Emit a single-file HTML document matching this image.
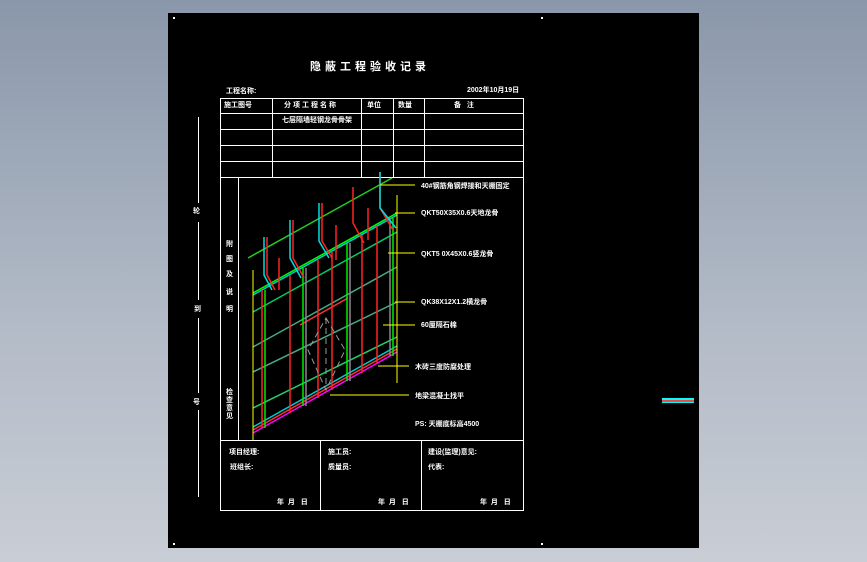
<!DOCTYPE html>
<html><head><meta charset="utf-8"><style>
html,body{margin:0;padding:0;width:867px;height:562px;overflow:hidden;background:linear-gradient(#8a97aa,#b4bcc8 60%,#c9cdd5);}
svg{position:absolute;left:0;top:0}
text{font-family:"Liberation Sans","Noto Sans CJK SC",sans-serif;fill:#fff;font-weight:bold;}
</style></head><body>
<svg width="867" height="562" viewBox="0 0 867 562">
<rect x="168" y="13" width="531" height="535" fill="#000"/>
<rect x="173" y="17" width="2" height="2" fill="#fff"/>
<rect x="541" y="17" width="2" height="2" fill="#fff"/>
<rect x="173" y="543" width="2" height="2" fill="#fff"/>
<rect x="541" y="543" width="2" height="2" fill="#fff"/>
<g stroke="#fff" stroke-width="1" fill="none">
<rect x="220.5" y="98.5" width="303" height="412"/>
<line x1="220" y1="113.5" x2="523" y2="113.5"/>
<line x1="220" y1="129.5" x2="523" y2="129.5"/>
<line x1="220" y1="145.5" x2="523" y2="145.5"/>
<line x1="220" y1="161.5" x2="523" y2="161.5"/>
<line x1="220" y1="177.5" x2="523" y2="177.5"/>
<line x1="220" y1="440.5" x2="523" y2="440.5"/>
<line x1="272.5" y1="98" x2="272.5" y2="177"/>
<line x1="361.5" y1="98" x2="361.5" y2="177"/>
<line x1="393.5" y1="98" x2="393.5" y2="177"/>
<line x1="424.5" y1="98" x2="424.5" y2="177"/>
<line x1="238.5" y1="177" x2="238.5" y2="440"/>
<line x1="320.5" y1="440" x2="320.5" y2="511"/>
<line x1="421.5" y1="440" x2="421.5" y2="511"/>
<line x1="198.5" y1="117" x2="198.5" y2="203"/>
<line x1="198.5" y1="222" x2="198.5" y2="300"/>
<line x1="198.5" y1="318" x2="198.5" y2="393"/>
<line x1="198.5" y1="410" x2="198.5" y2="497"/>
</g>
<text x="310" y="70" font-size="11" letter-spacing="4">隐蔽工程验收记录</text>
<text x="226" y="93" font-size="7">工程名称:</text>
<text x="467" y="92" font-size="7">2002年10月19日</text>
<g font-size="7">
<text x="224" y="107">施工图号</text>
<text x="284" y="107" letter-spacing="2">分项工程名称</text>
<text x="367" y="107">单位</text>
<text x="398" y="107">数量</text>
<text x="454" y="107">备 &#160; 注</text>
<text x="282" y="122">七层隔墙轻钢龙骨骨架</text>
<text x="193" y="213">轮</text><text x="194" y="311">到</text><text x="193" y="404">号</text>
<text x="226" y="246">附</text><text x="226" y="261">图</text><text x="226" y="276">及</text><text x="226" y="294">说</text><text x="226" y="311">明</text>
<text x="226" y="394">检</text><text x="226" y="402">查</text><text x="226" y="410">意</text><text x="226" y="418">见</text>
<text x="421" y="188">40#钢筋角钢焊接和天棚固定</text>
<text x="421" y="215">QKT50X35X0.6天地龙骨</text>
<text x="421" y="256">QKT5 0X45X0.6竖龙骨</text>
<text x="421" y="304">QK38X12X1.2横龙骨</text>
<text x="421" y="327">60厘隔石棉</text>
<text x="415" y="369">木砖三度防腐处理</text>
<text x="415" y="398">地梁混凝土找平</text>
<text x="415" y="426">PS: 天棚底标高4500</text>
<text x="229" y="454">项目经理:</text><text x="230" y="469">班组长:</text>
<text x="328" y="454">施工员:</text><text x="328" y="469">质量员:</text>
<text x="428" y="454">建设(监理)意见:</text><text x="428" y="469">代表:</text>
<text x="277" y="504">年 &#160;月 &#160; 日</text>
<text x="378" y="504">年 &#160;月 &#160; 日</text>
<text x="480" y="504">年 &#160;月 &#160; 日</text>
</g>
<g fill="none" stroke-width="1.5">
<line x1="248" y1="258" x2="392" y2="178" stroke="#2c2"/>
<line x1="253" y1="293" x2="397" y2="213" stroke="#0f0"/>
<line x1="253" y1="295" x2="397" y2="215" stroke="#0cc"/>
<line x1="253" y1="312" x2="397" y2="232" stroke="#0c6"/>
<line x1="253" y1="347" x2="397" y2="267" stroke="#4a8"/>
<line x1="253" y1="372" x2="397" y2="302" stroke="#4a8"/>
<line x1="253" y1="408" x2="397" y2="337" stroke="#2c6"/>
<line x1="253" y1="433" x2="397" y2="352" stroke="#f0f"/>
<line x1="253" y1="430" x2="397" y2="349" stroke="#f33"/>
<line x1="253" y1="427" x2="397" y2="346" stroke="#0cc"/>
<line x1="300" y1="325" x2="348" y2="298" stroke="#f33"/>
<g stroke="#f22">
<line x1="262" y1="290" x2="262" y2="428"/><line x1="290" y1="275" x2="290" y2="413"/>
<line x1="318" y1="260" x2="318" y2="398"/>
<line x1="332" y1="252" x2="332" y2="390"/><line x1="362" y1="235" x2="362" y2="373"/>
<line x1="377" y1="226" x2="377" y2="364"/>
</g>
<g stroke="#0e0">
<line x1="265" y1="290" x2="265" y2="428"/><line x1="303" y1="268" x2="303" y2="406"/>
<line x1="347" y1="243" x2="347" y2="381"/><line x1="393" y1="218" x2="393" y2="356"/>
</g>
<g stroke="#888"><line x1="306" y1="268" x2="306" y2="406"/><line x1="350" y1="243" x2="350" y2="381"/><line x1="390" y1="218" x2="390" y2="356"/></g>
<g stroke="#f22">
<path d="M267 237 V275 L275 290"/><path d="M293 220 V258 L304 278"/><path d="M322 203 V241 L332 258"/><path d="M353 187 V223 L364 243"/><path d="M380 172 V208 L393 230"/><path d="M279 258 V290"/><path d="M336 225 V260"/><path d="M368 208 V240"/>
</g>
<g stroke="#0dd">
<path d="M264 237 V275 L272 290"/><path d="M290 220 V258 L301 278"/><path d="M319 203 V241 L329 258"/><path d="M380 172 V208 L396 228"/>
</g>
<g stroke="#999" stroke-width="1" stroke-dasharray="6 4"><path d="M326 318 L345 350 L326 390 L308 350 Z"/><line x1="326" y1="318" x2="326" y2="390"/></g>
<g stroke="#ff0" stroke-width="1">
<line x1="253" y1="270" x2="253" y2="440"/><line x1="397" y1="195" x2="397" y2="383"/>
<line x1="380" y1="185" x2="415" y2="185"/><line x1="395" y1="213" x2="415" y2="213"/>
<line x1="388" y1="253" x2="415" y2="253"/><line x1="395" y1="302" x2="415" y2="302"/>
<line x1="383" y1="325" x2="415" y2="325"/><line x1="378" y1="366" x2="409" y2="366"/>
<line x1="330" y1="395" x2="409" y2="395"/>
</g>
</g>
<rect x="662" y="398" width="32" height="2" fill="#0ff"/>
<rect x="662" y="400" width="32" height="2" fill="#f44"/>
<rect x="662" y="402" width="32" height="1" fill="#0ff"/>
</svg>
</body></html>
